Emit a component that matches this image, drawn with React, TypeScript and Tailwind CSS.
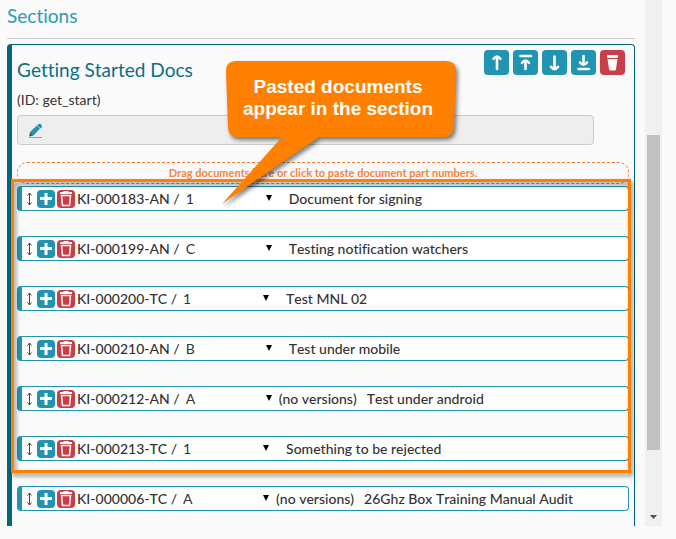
import { useState } from "react"
import type { ReactNode } from "react"

type Doc = {
  part: string
  version: string
  noVersions?: boolean
  title: string
}

const pastedDocs: Doc[] = [
  { part: "KI-000183-AN", version: "1", title: "Document for signing" },
  { part: "KI-000199-AN", version: "C", title: "Testing notification watchers" },
  { part: "KI-000200-TC", version: "1", title: "Test MNL 02" },
  { part: "KI-000210-AN", version: "B", title: "Test under mobile" },
  { part: "KI-000212-AN", version: "A", noVersions: true, title: "Test under android" },
  { part: "KI-000213-TC", version: "1", title: "Something to be rejected" },
]

const existingDocs: Doc[] = [
  { part: "KI-000006-TC", version: "A", noVersions: true, title: "26Ghz Box Training Manual Audit" },
]

const stroke = { fill: "none", stroke: "#fff", strokeWidth: 2.6, strokeLinecap: "round", strokeLinejoin: "round" } as const

const sectionActions: { label: string; danger?: boolean; icon: ReactNode }[] = [
  {
    label: "Move section up",
    icon: (
      <g {...stroke}>
        <path d="M13 7v12" />
        <path d="M9.500 8.800q2-2.300 3.500-2.300t3.500 2.300" />
      </g>
    ),
  },
  {
    label: "Move section to top",
    icon: (
      <g {...stroke}>
        <path d="M7.500 6h10.500" />
        <path d="M12.500 11v8" />
        <path d="M9 12.800q2-2.300 3.500-2.300t3.500 2.300" />
      </g>
    ),
  },
  {
    label: "Move section down",
    icon: (
      <g {...stroke}>
        <path d="M12.500 6.500v12" />
        <path d="M9 16.800q2 2.300 3.500 2.300t3.500-2.300" />
      </g>
    ),
  },
  {
    label: "Move section to bottom",
    icon: (
      <g {...stroke}>
        <path d="M12.500 6v8" />
        <path d="M9 12.500q2 2.300 3.500 2.300t3.500-2.300" />
        <path d="M7.500 19h10.500" />
      </g>
    ),
  },
  {
    label: "Delete section",
    danger: true,
    icon: (
      <g fill="#fff">
        <rect x="7" y="5" width="11" height="3" rx="1" />
        <path d="M7.500 9h10l-1.500 10q-.2 1.500-1.500 1.500h-4q-1.300 0-1.500-1.500z" />
      </g>
    ),
  },
]

function DocRow({ doc }: { doc: Doc }) {
  const [version, setVersion] = useState(doc.version)

  return (
    <li className="flex h-[25px] items-center rounded border border-l-[5px] border-[#2194b2] bg-white text-sm text-[#333]">
      <svg viewBox="0 0 7 15" className="ml-1 h-[15px] w-[7px] shrink-0" fill="none" stroke="#444">
        <path d="M3.500 2v12M1.500 4.500L3.500 2l2 2.500M1.500 11.500l2 2.500 2-2.500" />
      </svg>
      <button aria-label={`Add after ${doc.part}`} className="ml-1 size-[18px] shrink-0 rounded-sm bg-[#2194b2]">
        <svg viewBox="0 0 18 18" className="size-full" stroke="#fff" strokeWidth="3">
          <path d="M9 3v12M3 8.500h12" />
        </svg>
      </button>
      <button aria-label={`Remove ${doc.part}`} className="ml-0.5 size-[18px] shrink-0 rounded-sm bg-[#c93f48]">
        <svg viewBox="0 0 18 18" className="size-full" fill="none" stroke="#fff">
          <path d="M3 3h12" strokeWidth="2" />
          <path d="M6.500 1.500h5" />
          <path d="M4.500 5.500l1 10h7l1-10z" strokeWidth="1.500" />
        </svg>
      </button>
      <span className="ml-0.5 whitespace-nowrap font-medium">{doc.part} /</span>
      <span className="relative ml-0.5">
        <select
          aria-label={`Version of ${doc.part}`}
          value={version}
          onChange={(e) => setVersion(e.target.value)}
          className="block w-[93px] appearance-none bg-transparent pl-1 outline-none"
        >
          {["1", "A", "B", "C"].map((v) => (
            <option key={v}>{v}</option>
          ))}
        </select>
        <svg viewBox="0 0 6 6" className="pointer-events-none absolute right-[3px] top-1.5 size-1.5" fill="#000">
          <path d="M0 0h6L3 6z" />
        </svg>
      </span>
      <span className="ml-1 whitespace-nowrap font-medium">{doc.noVersions && "(no versions)"}</span>
      <span className="ml-2.5 truncate font-medium">{doc.title}</span>
    </li>
  )
}

function Callout() {
  return (
    <div className="pointer-events-none absolute left-[208px] top-3 w-[236px]">
      <svg
        viewBox="0 0 244 155"
        className="absolute left-0 top-0 h-[155px] w-[244px] overflow-visible drop-shadow-[2px_3px_2px_rgba(0,0,0,0.5)]"
      >
        <path
          d="M16 4H226Q236 4 236 14L234 70Q233 80 223 80H99L2 147 62 80H18Q8 80 8 70L6 14Q6 4 16 4z"
          fill="#ff8000"
        />
      </svg>
      <p className="relative pt-[19px] text-center font-['Liberation_Sans',Arial,sans-serif] text-[19px] font-bold leading-[22px] text-white">
        Pasted documents
        <br />
        appear in the section
      </p>
    </div>
  )
}

function Scrollbar() {
  return (
    <div className="flex w-[17px] shrink-0 flex-col items-center bg-[#f0f0f0]">
      <div className="mt-[135px] h-[315px] w-[13px] bg-[#c1c1c1]" />
      <svg viewBox="0 0 7 4" className="mb-[7px] mt-auto h-1 w-[7px]" fill="#505050">
        <path d="M0 0h7L3.500 4z" />
      </svg>
    </div>
  )
}

export default function App() {
  return (
    <div className="flex h-screen overflow-hidden bg-[#fafafa] pb-[13px] pl-[7px] pr-3.5 font-[Lato,sans-serif] [font-kerning:none] [font-variant-ligatures:none]">
      <main className="mr-2.5 flex min-w-0 flex-1 flex-col overflow-hidden">
        <h1 className="mb-[5px] border-b border-[#ccc] pb-2 pt-0.5 text-[19px] leading-7 text-[#2a9cb9]">Sections</h1>

        <section className="relative flex-1 rounded-t border border-b-0 border-l-[5px] border-[#00677f] px-[5px] pt-[5px]">
          <div className="flex justify-between pr-1">
            <h2 className="pt-1.5 text-[19px] leading-7 text-[#0b6f86]">Getting Started Docs</h2>
            <div className="flex gap-1">
              {sectionActions.map((action) => (
                <button
                  key={action.label}
                  aria-label={action.label}
                  className={`size-[25px] rounded ${action.danger ? "bg-[#c93f48]" : "bg-[#2194b2]"}`}
                >
                  <svg viewBox="0 0 25 25" className="size-full">
                    {action.icon}
                  </svg>
                </button>
              ))}
            </div>
          </div>

          <p className="mt-1.5 text-sm text-[#333]">(ID: get_start)</p>

          <button
            aria-label="Edit section text"
            className="mt-[5px] flex h-[30px] w-[calc(100%-35px)] items-center rounded border border-[#ccc] bg-[#eee] pl-2.5"
          >
            <svg viewBox="0 0 15 16" className="h-4 w-[15px]">
              <path d="M9 3.500l3 3L6 13l-4 1.500L2 10z" fill="#2194b2" />
              <path d="M10 2.500q1.500-1.500 3-.2t.8 2.900L12.500 6.500 9 3.500z" fill="#2194b2" />
              <path d="M9 3.500l3.200 3" stroke="#8cc5d5" strokeWidth=".8" />
              <path d="M2 10.500l3 3L1 14.500z" fill="#555" />
              <path d="M1 15.500h13" stroke="#f58442" />
            </svg>
          </button>

          <button className="mt-[17px] block h-[22px] w-full rounded-[10px] border border-dashed border-[#f47b30] text-center text-[11px] font-bold leading-5 text-[#f58442]">
            Drag documents here or click to paste document part numbers.
          </button>

          <div className="relative mt-0.5">
            <ul className="flex flex-col gap-[25px]">
              {pastedDocs.map((doc) => (
                <DocRow key={doc.part} doc={doc} />
              ))}
            </ul>
            {/* highlight around the pasted rows */}
            <div className="pointer-events-none absolute -bottom-3 -left-1.5 -right-0.5 -top-[7px] border-[3px] border-[#ff8000] drop-shadow-[2px_3px_2px_rgba(0,0,0,0.45)]" />
          </div>

          <ul className="mt-[25px] flex flex-col gap-[25px]">
            {existingDocs.map((doc) => (
              <DocRow key={doc.part} doc={doc} />
            ))}
          </ul>

          <Callout />
        </section>
      </main>
      <Scrollbar />
    </div>
  )
}
